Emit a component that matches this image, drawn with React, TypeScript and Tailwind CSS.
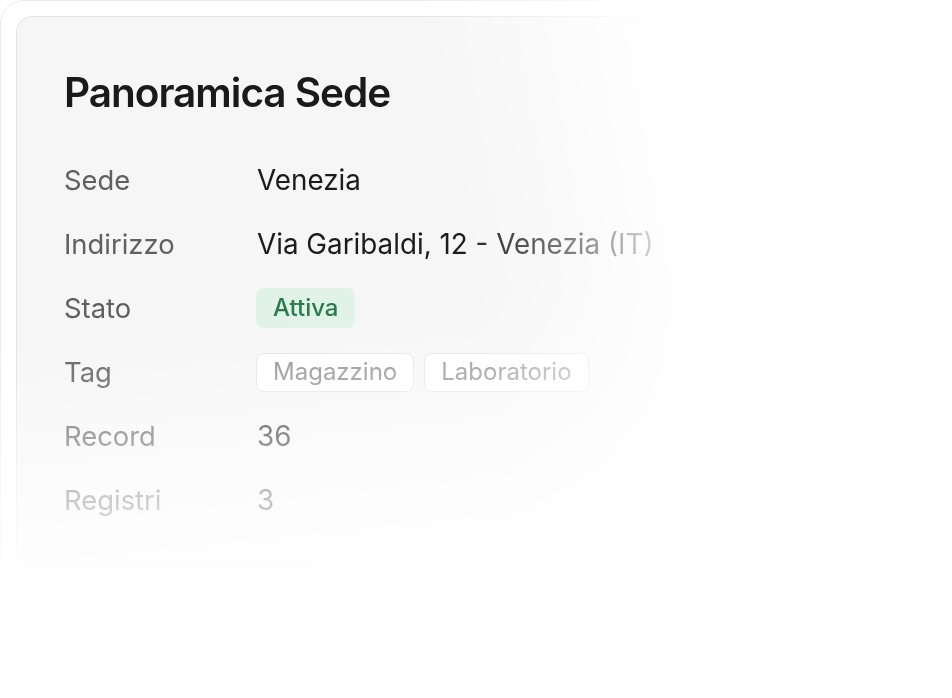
const rows: { label: string; value: React.ReactNode }[] = [
  { label: "Sede", value: "Venezia" },
  { label: "Indirizzo", value: "Via Garibaldi, 12 - Venezia (IT)" },
  {
    label: "Stato",
    value: (
      <span className="-ml-px inline-flex h-10 items-center rounded-lg bg-[#e0f3e6] px-[17px] text-[24px] font-medium text-[#2a7a4c]">
        Attiva
      </span>
    ),
  },
  {
    label: "Tag",
    value: (
      <div className="-ml-px flex gap-[10px]">
        {["Magazzino", "Laboratorio"].map((t) => (
          <span
            key={t}
            className="inline-flex h-[39px] items-center rounded-lg border border-[#e2e2e2] bg-white px-4 text-[24px] text-[#8a8a8a]"
          >
            {t}
          </span>
        ))}
      </div>
    ),
  },
  { label: "Record", value: "36" },
  { label: "Registri", value: "3" },
];

export default function App() {
  return (
    <div className="h-[698px] w-[952px] bg-white font-[Inter,sans-serif]">
      <div className="h-[600px] w-[952px] [mask-image:linear-gradient(80deg,#000_520px,transparent_752px),linear-gradient(174deg,#000_345px,rgba(0,0,0,0.35)_500px,rgba(0,0,0,0.12)_580px,transparent_640px)] [mask-composite:intersect]">
        <div className="w-[860px] rounded-[24px] border border-[#ececec] bg-white p-[15px]">
          <div className="rounded-2xl border border-[#e3e3e3] bg-[#f6f6f6] pt-[51px] pr-12 pb-[34px] pl-[47px]">
            <h2 className="text-[40.5px] leading-[50px] font-semibold tracking-tight text-[#1a1a1a]">
              Panoramica Sede
            </h2>
            <dl className="mt-[30px]">
              {rows.map((r) => (
                <div key={r.label} className="grid h-16 grid-cols-[193px_1fr] items-center">
                  <dt className="text-[27.4px] leading-[34px] text-[#606060]">{r.label}</dt>
                  <dd className="text-[27.8px] leading-[34px] text-[#1c1c1c]">{r.value}</dd>
                </div>
              ))}
            </dl>
          </div>
        </div>
      </div>
    </div>
  );
}
